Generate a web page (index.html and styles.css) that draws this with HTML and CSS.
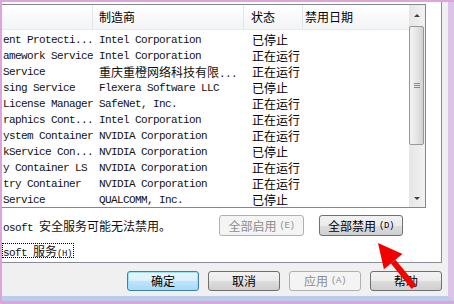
FILE: index.html
```html
<!DOCTYPE html>
<html lang="zh-CN">
<head>
    <meta charset="UTF-8">
    <meta name="viewport" content="width=device-width, initial-scale=1.0">
    <title>系统配置 - 服务</title>
    <link rel="stylesheet" href="styles.css">
</head>
<body>

    <div class="dialog">

        <!-- Services tab -->
        <div class="panel">
            <div class="list">
                <div class="list-body">
                    <div class="header">
                        <div class="hcell c1"></div>
                        <div class="hcell c2">制造商</div>
                        <div class="hcell c3">状态</div>
                        <div class="hcell c4">禁用日期</div>
                    </div>
                    <div class="rows">
                        <div class="row"><div class="cell c1 t">ent Protecti...</div><div class="cell c2 t">Intel Corporation</div><div class="cell c3 cn">已停止</div></div>
                        <div class="row"><div class="cell c1 t">amework Service</div><div class="cell c2 t">Intel Corporation</div><div class="cell c3 cn">正在运行</div></div>
                        <div class="row"><div class="cell c1 t">Service</div><div class="cell c2 t"><span class="cn">重庆重橙网络科技有限</span>...</div><div class="cell c3 cn">正在运行</div></div>
                        <div class="row"><div class="cell c1 t">sing Service</div><div class="cell c2 t">Flexera Software LLC</div><div class="cell c3 cn">已停止</div></div>
                        <div class="row"><div class="cell c1 t">License Manager</div><div class="cell c2 t">SafeNet, Inc.</div><div class="cell c3 cn">正在运行</div></div>
                        <div class="row"><div class="cell c1 t">raphics Cont...</div><div class="cell c2 t">Intel Corporation</div><div class="cell c3 cn">正在运行</div></div>
                        <div class="row"><div class="cell c1 t">ystem Container</div><div class="cell c2 t">NVIDIA Corporation</div><div class="cell c3 cn">正在运行</div></div>
                        <div class="row"><div class="cell c1 t">kService Con...</div><div class="cell c2 t">NVIDIA Corporation</div><div class="cell c3 cn">已停止</div></div>
                        <div class="row"><div class="cell c1 t">y Container LS</div><div class="cell c2 t">NVIDIA Corporation</div><div class="cell c3 cn">正在运行</div></div>
                        <div class="row"><div class="cell c1 t">try Container</div><div class="cell c2 t">NVIDIA Corporation</div><div class="cell c3 cn">正在运行</div></div>
                        <div class="row"><div class="cell c1 t">Service</div><div class="cell c2 t">QUALCOMM, Inc.</div><div class="cell c3 cn">已停止</div></div>
                    </div>
                </div>
                <div class="scrollbar">
                    <div class="sb-btn up"><span class="tri-up"></span></div>
                    <div class="thumb"><span class="grip"></span></div>
                    <div class="track"></div>
                    <div class="sb-btn down"><span class="tri-down"></span></div>
                </div>
            </div>

            <div class="note-row">
                <span class="note t">osoft <span class="cn">安全服务可能无法禁用。</span></span>
                <button class="btn" disabled><span class="cn">全部启用</span> <span class="key">(E)</span></button>
                <button class="btn"><span class="cn">全部禁用</span> <span class="key">(D)</span></button>
            </div>

            <div class="hide-row">
                <label class="focus t">soft <span class="cn">服务</span><span class="key">(H)</span></label>
            </div>
        </div>

        <!-- Dialog buttons -->
        <div class="buttons">
            <button class="btn default"><span class="cn">确定</span></button>
            <button class="btn"><span class="cn">取消</span></button>
            <button class="btn" disabled><span class="cn">应用</span> <span class="key">(A)</span></button>
            <button class="btn"><span class="cn">帮助</span></button>
        </div>

    </div>

    <!-- Red pointer drawn over the screenshot -->
    <svg class="pointer" width="454" height="304" viewBox="0 0 454 304">
        <polygon points="390.9,263.5 395.5,259.7 416.3,285.1 411.7,288.9" fill="#f20000"/>
        <polygon points="378,243 402.5,254 383.9,269.2" fill="#f20000"/>
    </svg>

</body>
</html>
```

FILE: styles.css
```css
body {
    margin: 0;
    width: 454px;
    height: 304px;
    overflow: hidden;
    position: relative;
    background-color: #dca6dc;
    font-family: "Noto Sans CJK SC", sans-serif;
    font-size: 12px;
    color: #000;
}

.dialog {
    margin: 2px 0 0 2px;
    width: 446px;
    height: 294px;
    background-color: #f0f0f0;
    border-bottom: 5px solid #bccbe8;
    border-right: 6px solid #dcc4e8;
}

/* mono text like SimSun's latin half */
.t {
    font-family: "Liberation Mono", "Noto Sans CJK SC", monospace;
    font-size: 11px;
    letter-spacing: -0.6px;
    color: #111;
}

.cn {
    font-family: "Noto Sans CJK SC", sans-serif;
    font-size: 12px;
    letter-spacing: 0;
}

.key {
    font-family: "Liberation Mono", monospace;
    font-size: 9px;
    letter-spacing: -0.4px;
}

.panel {
    box-sizing: border-box;
    width: 440px;
    height: 261px;
    background-color: #fff;
    border-right: 1px solid #898c95;
    border-bottom: 1px solid #898c95;
    padding-top: 2px;
}

.list {
    display: flex;
    width: 423px;
    height: 202px;
    border: 1px solid #828790;
    border-left: none;
}

.list-body {
    flex: 1;
    display: flex;
    flex-direction: column;
    overflow: hidden;
}

.header {
    display: flex;
    flex: none;
    height: 24px;
    background: linear-gradient(#ffffff, #f3f4f6);
    border-bottom: 1px solid #eaeaea;
}

.hcell {
    box-sizing: border-box;
    line-height: 24px;
    border-right: 1px solid #e3e4e6;
    white-space: nowrap;
}

.hcell.c1 { width: 91px; }
.hcell.c2 { width: 151px; padding-left: 6px; }
.hcell.c3 { width: 59px; padding-left: 7px; }
.hcell.c4 { flex: 1; padding-left: 2px; border-right: none; }

.rows {
    padding-top: 2px;
}

.row {
    display: flex;
    height: 16px;
    line-height: 16px;
}

.cell {
    box-sizing: border-box;
    white-space: nowrap;
    overflow: hidden;
}

.cell.c1 { width: 91px; padding-left: 1px; }
.cell.c2 { width: 158px; padding-left: 6px; }
.cell.c3 { width: 60px; padding-left: 1px; }

.scrollbar {
    width: 16px;
    display: flex;
    flex-direction: column;
    background: linear-gradient(to right, #e6e6e6, #f2f2f2);
}

.sb-btn {
    display: flex;
    align-items: center;
    justify-content: center;
}

.sb-btn.up { height: 20px; }
.sb-btn.down { height: 17px; }

.tri-up {
    width: 0;
    height: 0;
    border-left: 3px solid transparent;
    border-right: 3px solid transparent;
    border-bottom: 3px solid #404040;
}

.tri-down {
    width: 0;
    height: 0;
    border-left: 3px solid transparent;
    border-right: 3px solid transparent;
    border-top: 3px solid #404040;
}

.thumb {
    box-sizing: border-box;
    height: 119px;
    margin: 1px 1px 0 0;
    border: 1px solid #979797;
    border-radius: 2px;
    background: linear-gradient(to right, #f3f3f3, #e6e6e6 50%, #d2d2d2);
    display: flex;
    align-items: center;
    justify-content: center;
}

.grip {
    width: 6px;
    height: 5px;
    background: repeating-linear-gradient(#8a8a8a 0 1px, transparent 1px 2px);
}

.track {
    flex: 1;
}

.note-row {
    display: flex;
    align-items: center;
    height: 21px;
    margin-top: 7px;
    margin-right: 38px;
}

.note {
    flex: 1;
    padding-left: 1px;
    white-space: nowrap;
}

.btn {
    box-sizing: border-box;
    height: 21px;
    padding: 0;
    border: 1px solid #707070;
    border-radius: 3px;
    background: linear-gradient(#f2f2f2 0%, #ebebeb 50%, #dddddd 51%, #cfcfcf 100%);
    color: #000;
    display: flex;
    align-items: center;
    justify-content: center;
    gap: 3px;
    line-height: 16px;
}

.btn:disabled {
    border-color: #adb2b5;
    background: #f4f4f4;
    color: #8d8d8d;
}

.note-row .btn { width: 85px; }
.note-row .btn + .btn { width: 84px; margin-left: 15px; }

.hide-row {
    margin-top: 6px;
}

.focus {
    display: inline-block;
    box-sizing: border-box;
    height: 15px;
    line-height: 13px;
    border: 1px dotted #000;
    padding-right: 1px;
    white-space: nowrap;
}

.buttons {
    display: flex;
    justify-content: flex-end;
    gap: 9px;
    padding: 8px 6px 0 0;
}

.buttons .btn {
    width: 72px;
    height: 20px;
}

.btn.default {
    border-color: #3c7fb1;
    background: linear-gradient(#eaf6fd 0%, #d9f0fc 50%, #bee6fd 51%, #a7d9f5 100%);
    box-shadow: inset 0 0 0 1px #9be2fa;
}

.pointer {
    position: absolute;
    left: 0;
    top: 0;
    pointer-events: none;
}
```
